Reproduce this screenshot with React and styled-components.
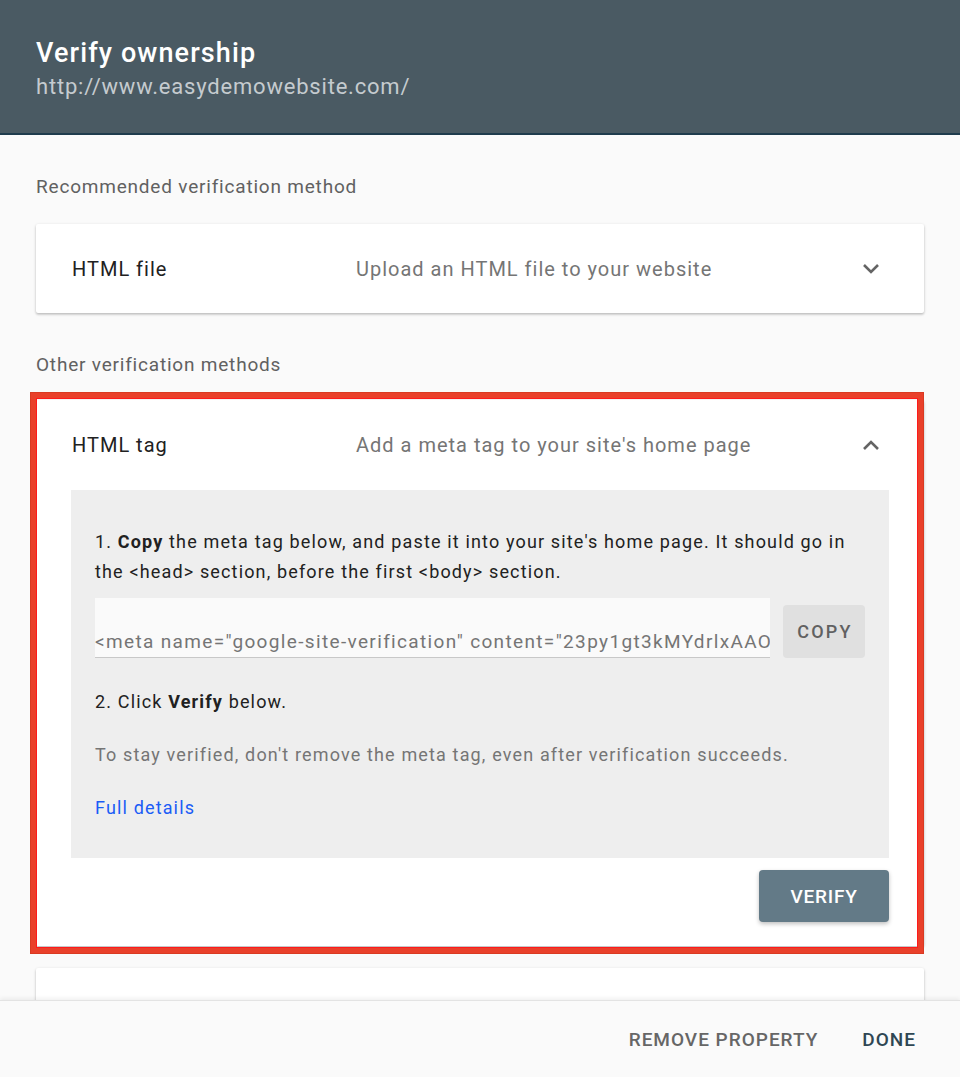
import styled, { createGlobalStyle } from "styled-components";

const Global = createGlobalStyle`
  html, body {
    margin: 0;
    padding: 0;
    background: #fafafa;
  }
  body {
    font-family: Roboto, "Liberation Sans", Arial, sans-serif;
    -webkit-font-smoothing: antialiased;
  }
`;

const Dialog = styled.div`
  width: 960px;
  height: 1077px;
  display: flex;
  flex-direction: column;
  overflow: hidden;
  background: #fafafa;
`;

const Header = styled.header`
  flex: none;
  height: 135px;
  box-sizing: border-box;
  background: #4a5a63;
  border-bottom: 2px solid #1f3c4d;
  padding: 36px 36px 0;
`;

const Title = styled.h1`
  margin: 0;
  font-size: 27px;
  font-weight: 500;
  letter-spacing: 1.1px;
  color: #ffffff;
  line-height: 34px;
`;

const Url = styled.div`
  margin-top: 2px;
  font-size: 22px;
  letter-spacing: 0.8px;
  color: #c5cbcf;
  line-height: 30px;
`;

const Body = styled.main`
  flex: 1;
  overflow: hidden;
  padding: 40px 36px 0;
`;

const SectionLabel = styled.div`
  font-size: 19px;
  letter-spacing: 0.8px;
  line-height: 24px;
  color: #616161;
  margin-top: ${(p) => p.$top || 0}px;
  margin-bottom: ${(p) => p.$bottom || 25}px;
`;

const Card = styled.section`
  position: relative;
  background: #ffffff;
  box-shadow: 0 1px 3px rgba(0, 0, 0, 0.22), 0 2px 2px rgba(0, 0, 0, 0.08);
  border-radius: 2px;
  margin-bottom: ${(p) => p.$gap || 0}px;
`;

const Highlight = styled.div`
  position: absolute;
  top: -7px;
  bottom: -7px;
  left: -5px;
  right: 1px;
  border: 5px solid #e9402a;
  box-shadow: inset 0 0 0 1px #ff1a1a, 0 0 0 1px #d93a22;
  pointer-events: none;
`;

const CardHead = styled.div`
  display: flex;
  align-items: center;
  height: 89px;
  padding: 0 36px;
`;

const Method = styled.div`
  width: 284px;
  font-size: 20px;
  letter-spacing: 1px;
  color: #212121;
`;

const Desc = styled.div`
  flex: 1;
  font-size: 20px;
  letter-spacing: 1px;
  color: #757575;
`;

const Chevron = styled.svg`
  width: 32px;
  height: 32px;
  margin-right: 1px;
  flex: none;
`;

const Panel = styled.div`
  margin: 1px 35px 0;
  background: #eeeeee;
  padding: 37px 24px 35px;
  font-size: 18px;
  letter-spacing: 1.15px;
  line-height: 30px;
  color: #212121;
`;

const Step = styled.p`
  margin: 0;
  b {
    font-weight: 700;
  }
`;

const CopyRow = styled.div`
  display: flex;
  align-items: flex-end;
  gap: 13px;
  margin: 11px 0 29px;
`;

const TagField = styled.div`
  flex: 1;
  height: 60px;
  box-sizing: border-box;
  background: #fafafa;
  border-bottom: 1px solid #c8c8c8;
  color: #757575;
  font-size: 19px;
  letter-spacing: 1.35px;
  line-height: 30px;
  padding-top: 29px;
  white-space: nowrap;
  overflow: hidden;
`;

const FlatButton = styled.button`
  flex: none;
  border: none;
  border-radius: 4px;
  font-family: inherit;
  font-weight: 500;
  cursor: pointer;
  ${(p) =>
    p.$kind === "copy"
      ? `
    width: 82px;
    height: 53px;
    background: #e0e0e0;
    color: #616161;
    font-size: 18px;
    letter-spacing: 2.2px;
    padding: 0 0 0 2px;
  `
      : `
    width: 130px;
    height: 52px;
    background: #637a87;
    color: #ffffff;
    font-size: 19px;
    letter-spacing: 0.8px;
    box-shadow: 0 2px 4px rgba(0,0,0,0.25);
  `}
`;

const Note = styled.p`
  margin: 23px 0 0;
  color: #757575;
`;

const DetailsLink = styled.a`
  display: block;
  margin-top: 23px;
  color: #1a5cf6;
  text-decoration: none;
`;

const Actions = styled.div`
  display: flex;
  justify-content: flex-end;
  padding: 12px 35px 24px;
`;

const Footer = styled.footer`
  flex: none;
  height: 77px;
  box-sizing: border-box;
  background: #fafafa;
  border-top: 1px solid #e3e3e3;
  box-shadow: 0 -2px 4px rgba(0, 0, 0, 0.06);
  display: flex;
  align-items: center;
  justify-content: flex-end;
  gap: 44px;
  padding: 0 44px 0 0;
  position: relative;
`;

const TextButton = styled.button`
  border: none;
  background: none;
  padding: 0;
  font-family: inherit;
  font-size: 19px;
  font-weight: 500;
  letter-spacing: 1px;
  color: ${(p) => (p.$primary ? "#2e4653" : "#666666")};
  cursor: pointer;
`;

const Stub = styled(Card)`
  height: 80px;
`;

const ChevronIcon = ({ up }) => (
  <Chevron viewBox="0 0 32 32" aria-hidden="true">
    <polyline
      points={up ? "9,20 16,13 23,20" : "9,12 16,19 23,12"}
      fill="none"
      stroke="#646464"
      strokeWidth="2.6"
    />
  </Chevron>
);

export default function App() {
  return (
    <>
      <Global />
      <Dialog>
        <Header>
          <Title>Verify ownership</Title>
          <Url>http://www.easydemowebsite.com/</Url>
        </Header>
        <Body>
          <SectionLabel>Recommended verification method</SectionLabel>
          <Card>
            <CardHead>
              <Method>HTML file</Method>
              <Desc>Upload an HTML file to your website</Desc>
              <ChevronIcon />
            </CardHead>
          </Card>
          <SectionLabel $top={40} $bottom={23}>
            Other verification methods
          </SectionLabel>
          <Card $gap={22}>
            <Highlight />
            <CardHead>
              <Method>HTML tag</Method>
              <Desc>Add a meta tag to your site's home page</Desc>
              <ChevronIcon up />
            </CardHead>
            <Panel>
              <Step>
                1. <b>Copy</b> the meta tag below, and paste it into your site's home page. It should go in
                the &lt;head&gt; section, before the first &lt;body&gt; section.
              </Step>
              <CopyRow>
                <TagField>
                  &lt;meta name="google-site-verification" content="23py1gt3kMYdrlxAAOq7bWm1nZs" /&gt;
                </TagField>
                <FlatButton $kind="copy">COPY</FlatButton>
              </CopyRow>
              <Step>
                2. Click <b>Verify</b> below.
              </Step>
              <Note>To stay verified, don't remove the meta tag, even after verification succeeds.</Note>
              <DetailsLink href="#">Full details</DetailsLink>
            </Panel>
            <Actions>
              <FlatButton>VERIFY</FlatButton>
            </Actions>
          </Card>
          <Stub />
        </Body>
        <Footer>
          <TextButton>REMOVE PROPERTY</TextButton>
          <TextButton $primary>DONE</TextButton>
        </Footer>
      </Dialog>
    </>
  );
}
